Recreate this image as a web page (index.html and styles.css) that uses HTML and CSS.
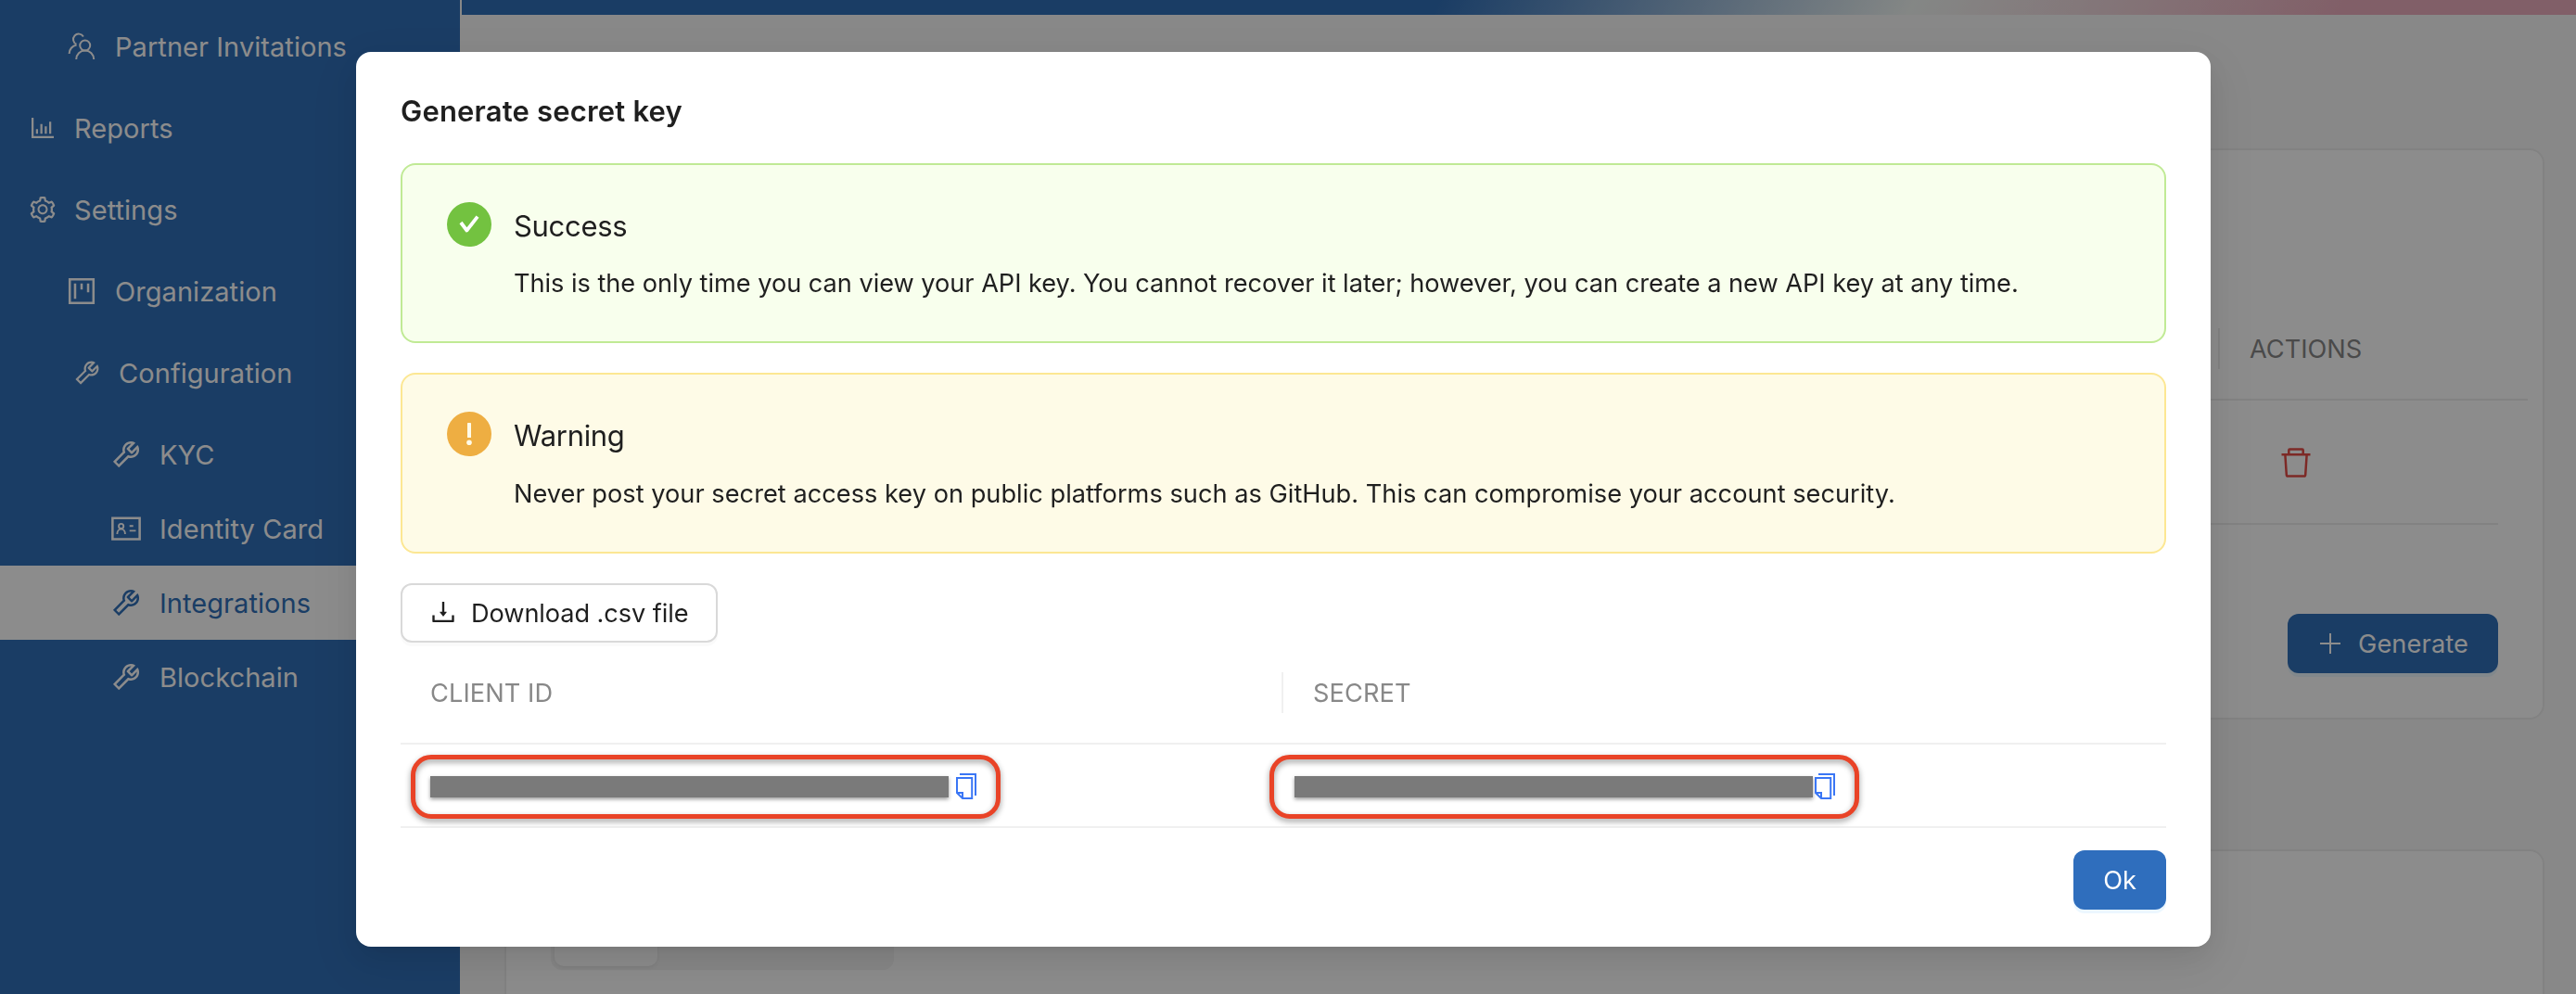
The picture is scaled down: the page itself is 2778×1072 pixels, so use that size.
FILE: index.html
```html
<!DOCTYPE html>
<html lang="en">
<head>
<meta charset="utf-8">
<title>Integrations</title>
<link rel="stylesheet" href="styles.css">
</head>
<body>
<svg class="sprite" aria-hidden="true">
  <symbol id="i-tool" viewBox="0 0 1024 1024"><path fill="currentColor" d="M876.6 239.5c-.5-.9-1.2-1.8-2-2.5-5-5-13.1-5-18.1 0L684.2 409.3l-67.9-67.9L788.7 169c.8-.8 1.4-1.6 2-2.5 3.6-6.1 1.6-13.9-4.5-17.5-98.2-58-226.8-44.7-311.3 39.7-67 67-89.2 162-66.5 247.4l-293 293c-3 3-2.8 7.9.3 11l169.7 169.7c3.1 3.1 8.1 3.3 11 .3l292.9-292.9c85.5 22.8 180.5.7 247.6-66.4 84.4-84.5 97.7-213.1 39.7-311.3zM786 499.8c-58.1 58.1-145.3 69.3-214.6 33.6l-8.8 8.8-.1-.1-274 274.1-79.2-79.2 230.1-230.1s0 .1.1.1l52.8-52.8c-35.7-69.3-24.5-156.5 33.6-214.6a184.2 184.2 0 01144-53.5L537 318.9a32.05 32.05 0 000 45.3l124.5 124.5a32.05 32.05 0 0045.3 0l132.8-132.8c3.7 51.8-14.4 104.8-53.6 143.9z"/></symbol>
  <symbol id="i-copy" viewBox="0 0 22 28"><path fill="none" stroke="currentColor" stroke-width="2" d="M4 1H21V24M1 5H17.2V27H7L1 21ZM1 21H7V27"/></symbol>
</svg>

<div class="layout">
  <nav class="sidebar">
    <a class="item level-2"><svg class="icon-lg" viewBox="0 0 36 36"><g fill="none" stroke="currentColor" stroke-width="2"><circle cx="21.7" cy="17" r="5.5"/><path d="M12.2 32A9.5 9.5 0 0 1 31.2 32M19.9 7.6A5.8 5.8 0 1 0 12.5 15.7M12.6 16.4A9.8 9.8 0 0 0 4.6 26"/></g></svg><span>Partner Invitations</span></a>
    <a class="item level-1"><svg class="icon-md" viewBox="0 0 1024 1024"><path fill="currentColor" d="M888 792H200V168c0-4.400-3.600-8-8-8h-56c-4.400 0-8 3.600-8 8v688c0 4.400 3.600 8 8 8h752c4.400 0 8-3.600 8-8v-56c0-4.400-3.600-8-8-8zm-600-80h56c4.400 0 8-3.600 8-8V560c0-4.400-3.600-8-8-8h-56c-4.400 0-8 3.600-8 8v144c0 4.400 3.600 8 8 8zm152 0h56c4.400 0 8-3.600 8-8V384c0-4.400-3.600-8-8-8h-56c-4.400 0-8 3.600-8 8v320c0 4.400 3.600 8 8 8zm152 0h56c4.400 0 8-3.600 8-8V462c0-4.400-3.600-8-8-8h-56c-4.400 0-8 3.600-8 8v242c0 4.400 3.600 8 8 8zm152 0h56c4.400 0 8-3.600 8-8V304c0-4.400-3.600-8-8-8h-56c-4.400 0-8 3.600-8 8v400c0 4.400 3.600 8 8 8z"/></svg><span>Reports</span></a>
    <a class="item level-1"><svg class="icon-md" viewBox="0 0 1024 1024"><path fill="currentColor" d="M924.8 625.7l-65.500-56c3.100-19 4.700-38.400 4.700-57.800s-1.600-38.800-4.700-57.800l65.500-56a32.030 32.030 0 009.300-35.200l-.9-2.600a443.740 443.740 0 00-79.700-137.900l-1.800-2.100a32.120 32.120 0 00-35.100-9.500l-81.300 28.900c-30-24.600-63.500-44-99.700-57.600l-15.700-85a32.050 32.050 0 00-25.800-25.700l-2.700-.5c-52.100-9.400-106.900-9.400-159 0l-2.700.5a32.050 32.050 0 00-25.800 25.700l-15.800 85.400a351.860 351.860 0 00-99 57.400l-81.900-29.100a32 32 0 00-35.100 9.500l-1.800 2.100a446.020 446.020 0 00-79.700 137.900l-.9 2.600c-4.500 12.500-.8 26.500 9.300 35.200l66.300 56.600c-3.100 18.800-4.600 38-4.600 57.100 0 19.200 1.500 38.400 4.600 57.100L99 625.500a32.030 32.030 0 00-9.300 35.200l.9 2.600c18.100 50.400 44.900 96.900 79.700 137.900l1.800 2.100a32.120 32.120 0 0035.100 9.500l81.900-29.100c29.800 24.500 63.100 43.900 99 57.400l15.800 85.400a32.050 32.050 0 0025.800 25.700l2.700.5a449.400 449.400 0 00159 0l2.700-.5a32.050 32.050 0 0025.800-25.700l15.700-85a350 350 0 0099.700-57.600l81.300 28.900a32 32 0 0035.100-9.500l1.800-2.100c34.800-41.100 61.600-87.500 79.700-137.900l.9-2.600c4.500-12.300.8-26.300-9.300-35zM788.300 465.900c2.500 15.100 3.800 30.600 3.800 46.100s-1.300 31-3.800 46.100l-6.600 40.100 74.700 63.900a370.030 370.030 0 01-42.600 73.600L721 702.800l-31.400 25.800c-23.900 19.600-50.500 35-79.300 45.800l-38.100 14.300-17.900 97a377.500 377.500 0 01-85 0l-17.900-97.200-37.800-14.500c-28.500-10.800-55-26.200-78.700-45.700l-31.400-25.900-93.400 33.200c-17-22.900-31.200-47.600-42.600-73.600l75.500-64.500-6.500-40c-2.400-14.900-3.700-30.300-3.700-45.500 0-15.300 1.200-30.600 3.700-45.500l6.500-40-75.500-64.500c11.300-26.100 25.600-50.700 42.600-73.600l93.400 33.200 31.400-25.900c23.700-19.500 50.200-34.900 78.700-45.700l37.900-14.300 17.900-97.200c28.100-3.200 56.800-3.200 85 0l17.900 97 38.100 14.300c28.700 10.800 55.400 26.200 79.300 45.800l31.400 25.800 92.800-32.900c17 22.900 31.200 47.600 42.600 73.600L781.800 426l6.500 39.900zM512 326c-97.200 0-176 78.800-176 176s78.800 176 176 176 176-78.800 176-176-78.800-176-176-176zm79.200 255.200A111.600 111.600 0 01512 614c-29.900 0-58-11.700-79.200-32.800A111.600 111.600 0 01400 502c0-29.900 11.700-58 32.800-79.200C454 401.600 482.100 390 512 390c29.900 0 58 11.600 79.200 32.800A111.600 111.600 0 01624 502c0 29.900-11.700 58-32.800 79.200z"/></svg><span>Settings</span></a>
    <a class="item level-2"><svg class="icon-lg" viewBox="0 0 1024 1024"><path fill="none" stroke="currentColor" stroke-width="72" d="M148 148H876V876H148Z"/><path fill="currentColor" d="M276 280h72v464h-72zM476 280h72v184h-72zM676 280h72v264h-72z"/></svg><span>Organization</span></a>
    <a class="item level-2b"><svg class="icon-md"><use href="#i-tool"/></svg><span>Configuration</span></a>
    <div class="group">
      <a class="item level-3"><svg class="icon-lg"><use href="#i-tool"/></svg><span>KYC</span></a>
      <a class="item level-3"><svg class="icon-lg" viewBox="0 0 1024 1024"><g fill="none" stroke="currentColor" stroke-width="72"><path d="M96 190H928V838H96Z"/><g stroke-width="54"><circle cx="360" cy="440" r="74"/><path d="M238 680a122 150 0 0 1 244 0M617 435H731M617 580H810"/></g></g></svg><span>Identity Card</span></a>
      <a class="item level-3 active"><svg class="icon-lg"><use href="#i-tool"/></svg><span>Integrations</span></a>
      <a class="item level-3"><svg class="icon-lg"><use href="#i-tool"/></svg><span>Blockchain</span></a>
    </div>
  </nav>

  <main class="main">
    <header class="topbar"></header>
    <section class="card keys">
      <div class="keys-head">
        <div class="keys-head-rest"></div>
        <div class="keys-col">ACTIONS</div>
      </div>
      <div class="keys-row">
        <svg class="trash" viewBox="0 0 32 32"><path fill="none" stroke="currentColor" stroke-width="2.500" stroke-linejoin="round" d="M.5 7.200H31.500M8.300 7V2.500a1 1 0 0 1 1-1H22.700a1 1 0 0 1 1 1V7M4.400 8L5.800 29.200a1.500 1.500 0 0 0 1.500 1.400H24.700a1.500 1.500 0 0 0 1.500-1.400L27.600 8"/></svg>
      </div>
      <div class="keys-actions">
        <button class="btn btn-primary btn-generate"><svg class="plus" viewBox="0 0 22 22"><path stroke="currentColor" stroke-width="2" d="M0 11H22M11 0V22"/></svg><span>Generate</span></button>
      </div>
    </section>
    <section class="card tabs-card">
      <div class="segmented"><div class="segment"></div></div>
    </section>
  </main>
</div>

<div class="overlay">
  <div class="modal">
    <h1 class="modal-title">Generate secret key</h1>
    <div class="alert alert-success">
      <svg class="alert-icon" viewBox="0 0 48 48"><circle cx="24" cy="24" r="24" fill="#73c240"/><path fill="none" stroke="#fff" stroke-width="3.800" stroke-linejoin="round" d="M15 22L21.400 30.500L33 15.600"/></svg>
      <div>
        <div class="alert-title">Success</div>
        <div class="alert-text">This is the only time you can view your API key. You cannot recover it later; however, you can create a new API key at any time.</div>
      </div>
    </div>
    <div class="alert alert-warning">
      <svg class="alert-icon" viewBox="0 0 48 48"><circle cx="24" cy="24" r="24" fill="#eeae42"/><rect x="22" y="12" width="4" height="16" rx=".6" fill="#fffbe8"/><circle cx="24" cy="33.300" r="2.800" fill="#fffbe8"/></svg>
      <div>
        <div class="alert-title">Warning</div>
        <div class="alert-text loose">Never post your secret access key on public platforms such as GitHub. This can compromise your account security.</div>
      </div>
    </div>
    <button class="btn btn-download"><svg class="icon-md" viewBox="0 0 1024 1024"><path fill="currentColor" d="M505.700 661a8 8 0 0012.600 0l112-141.700c4.100-5.200.4-12.900-6.300-12.900h-74.100V168c0-4.400-3.600-8-8-8h-60c-4.400 0-8 3.600-8 8v338.300H400c-6.700 0-10.400 7.700-6.300 12.900l112 141.800zM878 626h-60c-4.400 0-8 3.600-8 8v154H214V634c0-4.400-3.600-8-8-8h-60c-4.400 0-8 3.600-8 8v198c0 17.700 14.300 32 32 32h684c17.700 0 32-14.300 32-32V634c0-4.400-3.600-8-8-8z"/></svg><span>Download .csv file</span></button>
    <div class="grid">
      <div class="th th-divided">CLIENT ID</div>
      <div class="th">SECRET</div>
      <div class="td"><span class="mask"></span><svg class="copy"><use href="#i-copy"/></svg><span class="highlight"></span></div>
      <div class="td td-secret"><span class="mask"></span><svg class="copy"><use href="#i-copy"/></svg><span class="highlight"></span></div>
    </div>
    <div class="modal-footer"><button class="btn btn-primary btn-ok">Ok</button></div>
  </div>
</div>
</body>
</html>
```
FILE: styles.css
```css
* { box-sizing: border-box; }

body {
  margin: 0;
  height: 1072px;
  overflow: hidden;
  font-family: Inter, "Liberation Sans", sans-serif;
  font-size: 27.2px;
  color: #1f1f1f;
  background: #f8f8f8;
}

.sprite { display: none; }
svg { display: block; flex: none; }
.icon-md { width: 32px; height: 32px; }
.icon-lg { width: 36px; height: 36px; }

.layout { display: flex; height: 1072px; }

/* Sidebar */
.sidebar {
  width: 496px;
  flex: none;
  padding-top: 10px;
  display: flex;
  flex-direction: column;
  gap: 8px;
  background: #306fb8;
  color: #fff;
  font-size: 29px;
  letter-spacing: .06px;
}
.item {
  height: 80px;
  display: flex;
  align-items: center;
  gap: 18px;
}
.level-1 { padding-left: 30px; }
.level-2 { padding-left: 70px; }
.level-2b { padding-left: 78px; }
.level-3 { padding-left: 118px; }
.active { background: #fff; color: #306fb8; }

/* Page behind the dialog */
.main { flex: 1; min-width: 0; overflow: hidden; }
.topbar {
  height: 16px;
  margin-left: 2px;
  background: linear-gradient(116deg, #306fb8 46%, #f1f6f3 68.500%, #ecadbd 89%);
}
.card {
  width: 2200px;
  margin-left: 48px;
  padding: 48px;
  border: 2px solid #ededed;
  border-radius: 16px;
  background: #fff;
}
.keys { height: 616px; margin-top: 144px; padding-top: 160px; }
.keys-head {
  height: 110px;
  margin-right: -32px;
  display: flex;
  align-items: center;
  border-bottom: 2px solid #ededed;
  color: #888;
}
.keys-head-rest { width: 1800px; height: 44px; border-right: 2px solid #ededed; }
.keys-col { padding-left: 32px; }
.keys-row {
  height: 134px;
  padding-left: 1866px;
  padding-top: 2px;
  display: flex;
  align-items: center;
  border-bottom: 2px solid #ededed;
  color: #e34c45;
}
.trash { width: 32px; height: 32px; }
.keys-actions { display: flex; justify-content: flex-end; margin-top: 96px; }
.tabs-card { height: 300px; margin-top: 140px; }
.segmented {
  width: 370px;
  height: 80px;
  padding: 4px;
  border-radius: 12px;
  background: #f5f5f5;
}
.segment {
  width: 111px;
  height: 72px;
  border-radius: 10px;
  background: #fff;
  box-shadow: 0 2px 4px rgba(0, 0, 0, .06);
}

/* Buttons */
.btn {
  height: 64px;
  padding: 0;
  display: flex;
  align-items: center;
  border: 0;
  border-radius: 12px;
  font: inherit;
}
.btn-primary {
  color: #fff;
  background: #2f6ebd;
  box-shadow: 0 4px 0 #ecf7ff;
}
.btn-generate {
  width: 227px;
  padding-left: 35px;
  gap: 19px;
  letter-spacing: .12px;
  background: #306fb8;
}
.plus { width: 22px; height: 22px; }
.btn-download {
  width: 342px;
  margin-top: 32px;
  padding-left: 28px;
  gap: 14px;
  border: 2px solid #d9d9d9;
  background: #fff;
  color: #1f1f1f;
  letter-spacing: -.1px;
  box-shadow: 0 4px 0 rgba(0, 0, 0, .02);
}
.btn-download svg { margin-top: -2px; }
.btn-ok { width: 100px; justify-content: center; }

/* Dialog */
.overlay {
  position: fixed;
  inset: 0;
  padding-top: 56px;
  background: rgba(0, 0, 0, .45);
}
.modal {
  width: 2000px;
  height: 965px;
  margin-left: 384px;
  padding: 40px 48px;
  border-radius: 16px;
  background: #fff;
  box-shadow:
    0 12px 32px rgba(0, 0, 0, .08),
    0 6px 12px -8px rgba(0, 0, 0, .12),
    0 18px 56px 16px rgba(0, 0, 0, .05);
}
.modal-title {
  margin: 0 0 32px;
  font-size: 31px;
  line-height: 48px;
  font-weight: 600;
  letter-spacing: .18px;
}
.alert {
  display: flex;
  gap: 24px;
  padding: 40px 48px;
  border: 2px solid;
  border-radius: 16px;
}
.alert + .alert { margin-top: 32px; }
.alert-success { background: #f8ffed; border-color: #c0ea95; }
.alert-warning { background: #fefbe7; border-color: #fce793; }
.alert-icon { width: 48px; height: 48px; }
.alert-title {
  font-size: 31px;
  line-height: 51px;
  letter-spacing: -.3px;
}
.alert-text { margin-top: 15px; line-height: 44px; letter-spacing: -.04px; }
.alert-text.loose { margin-top: 16px; letter-spacing: .015px; }

/* Key table */
.grid { display: grid; grid-template-columns: 1fr 1fr; grid-template-rows: 110px 90px; }
.th, .td {
  display: flex;
  align-items: center;
  padding-left: 32px;
  border-bottom: 2px solid #f0f0f0;
}
.th { color: #888; letter-spacing: .08px; }
.th-divided {
  background: linear-gradient(#f0f0f0, #f0f0f0) right center / 2px 44px no-repeat;
}
.td { position: relative; }
.td-secret { padding-left: 12px; }
.mask {
  width: 559px;
  height: 23px;
  margin-top: 2px;
  background: #7a7a7a;
  box-shadow: 0 2px 4px rgba(0, 0, 0, .4);
}
.copy { width: 22px; height: 28px; margin: 2px 0 0 8px; color: #3a76f5; }
.td-secret .copy { margin-left: 2px; }
.highlight {
  position: absolute;
  left: 11px;
  top: 11px;
  width: 636px;
  height: 69px;
  border: 5px solid #e94327;
  border-radius: 22px;
  filter: drop-shadow(0 3px 3px rgba(0, 0, 0, .4));
}
.td-secret .highlight { left: -15px; }
.modal-footer { display: flex; justify-content: flex-end; margin-top: 24px; }
```
